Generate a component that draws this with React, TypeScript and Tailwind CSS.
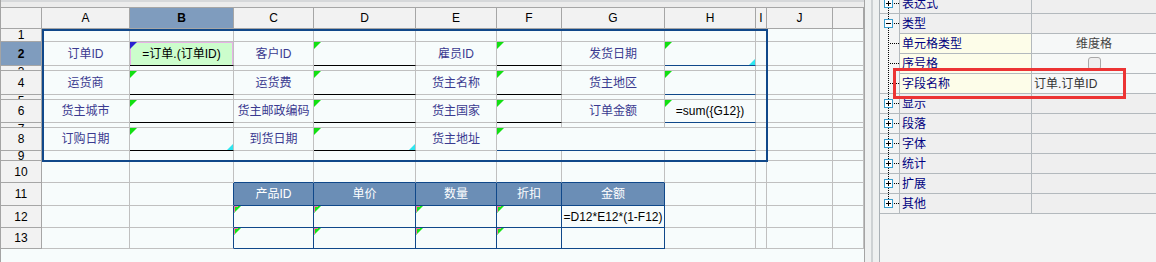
import React from "react";

type Cell = {
  t?: string;
  k?: "lbl" | "hd";
  bb?: "k" | "b";
  br?: "b";
  tri?: "g" | "v" | "gp";
  cy?: boolean;
  green?: boolean;
  span?: number;
};

const COLS = ["A", "B", "C", "D", "E", "F", "G", "H", "I", "J", ""];
const THIN = [3, 5, 7];

function blank(): Cell[] {
  return Array.from({ length: 11 }, () => ({}));
}

function buildRows(): Cell[][] {
  const rows: Cell[][] = [];
  for (let i = 0; i < 13; i++) rows.push(blank());

  rows[1] = [
    { t: "订单ID", k: "lbl" },
    { t: "=订单.(订单ID)", green: true, tri: "v", bb: "k" },
    { t: "客户ID", k: "lbl" },
    { tri: "g", bb: "k" },
    { t: "雇员ID", k: "lbl" },
    { tri: "g", bb: "k" },
    { t: "发货日期", k: "lbl" },
    { tri: "g", bb: "b", cy: true },
    {},
    {},
    {},
  ];
  rows[3] = [
    { t: "运货商", k: "lbl" },
    { tri: "g", bb: "k" },
    { t: "运货费", k: "lbl" },
    { tri: "g", bb: "k" },
    { t: "货主名称", k: "lbl" },
    { tri: "g", bb: "k" },
    { t: "货主地区", k: "lbl" },
    { tri: "g", bb: "b" },
    {},
    {},
    {},
  ];
  rows[5] = [
    { t: "货主城市", k: "lbl" },
    { tri: "g", bb: "k" },
    { t: "货主邮政编码", k: "lbl" },
    { tri: "g", bb: "k" },
    { t: "货主国家", k: "lbl" },
    { tri: "g", bb: "k" },
    { t: "订单金额", k: "lbl" },
    { t: "=sum({G12})", tri: "g", bb: "b" },
    {},
    {},
    {},
  ];
  rows[7] = [
    { t: "订购日期", k: "lbl" },
    { tri: "g", bb: "k", cy: true },
    { t: "到货日期", k: "lbl" },
    { tri: "g", bb: "k", cy: true },
    { t: "货主地址", k: "lbl" },
    { tri: "g", bb: "b", span: 3 },
    {},
    {},
    {},
  ];

  // order detail table
  for (let c = 2; c <= 6; c++) rows[9][c] = { bb: "b" };
  const heads = ["产品ID", "单价", "数量", "折扣", "金额"];
  for (let r = 10; r <= 12; r++) {
    rows[r][1] = { br: "b" };
    for (let c = 2; c <= 6; c++) {
      if (r === 10) rows[r][c] = { t: heads[c - 2], k: "hd", br: "b", bb: "b" };
      else rows[r][c] = { tri: c < 6 ? "gp" : undefined, br: "b", bb: "b" };
    }
  }
  rows[11][6].t = "=D12*E12*(1-F12)";
  return rows;
}

function Tri({ kind }: { kind: "g" | "v" | "gp" }) {
  if (kind === "gp") {
    return (
      <svg className="absolute left-0 top-0" width="7" height="7" viewBox="0 0 7 7">
        <polygon points="0,0 7,0 0,7" fill="#16e616" />
        <rect x="0" y="0" width="1" height="6" fill="#f47aa0" />
        <rect x="1" y="0" width="3" height="1" fill="#f47aa0" />
      </svg>
    );
  }
  return (
    <svg className="absolute left-0 top-0" width="7" height="7" viewBox="0 0 7 7">
      <polygon points="0,0 7,0 0,7" fill={kind === "v" ? "#2a20d2" : "#12e012"} />
    </svg>
  );
}

function Corner() {
  return (
    <svg className="absolute bottom-0 right-0" width="6" height="6" viewBox="0 0 6 6">
      <polygon points="6,0 6,6 0,6" fill="#2ee6f0" />
    </svg>
  );
}

function SheetCell({ c }: { c: Cell }) {
  const right = c.br === "b" ? "border-r-[#10488a]" : "border-r-[#c0c0c0]";
  const bottom =
    c.bb === "k"
      ? "border-b-black"
      : c.bb === "b"
      ? "border-b-[#10488a]"
      : "border-b-[#c0c0c0]";
  const tone =
    c.k === "hd"
      ? "bg-[#6b8eb6] text-white"
      : c.green
      ? "bg-[#ccfdcc] text-black"
      : c.k === "lbl"
      ? "text-[#3a3a90]"
      : "text-black";
  return (
    <div
      className={`relative flex items-center justify-center overflow-visible whitespace-nowrap border-r border-b text-[12px] ${right} ${bottom} ${tone} ${
        c.span === 3 ? "col-span-3" : ""
      }`}
    >
      {c.green && (
        <span className="pointer-events-none absolute inset-0 border border-b-0 border-[#e6b2e6]" />
      )}
      {c.tri && <Tri kind={c.tri} />}
      {c.cy && <Corner />}
      {c.t && <span className="relative">{c.t}</span>}
    </div>
  );
}

function Sheet() {
  const rows = buildRows();
  return (
    <div className="flex w-[865px] flex-col border-l border-r border-[#a4a4a4] bg-[#f7fcfc]">
      <div className="h-[7px] border-t-2 border-[#d6d8da] bg-[#ececec]" />
      <div className="relative grid grid-cols-[41px_88px_104px_80px_102px_81px_65px_103px_91px_11px_66px_31px] grid-rows-[22px_13px_24px_5px_24px_5px_23px_5px_23px_10px_22px_23px_22px_21px]">
        <div className="border-t border-r border-b border-[#a6a6a6] bg-[#f2f2f2]" />
        {COLS.map((h, i) => (
          <div
            key={i}
            className={`flex items-center justify-center border-t border-r border-b border-[#a6a6a6] text-[12px] text-black ${
              h === "B" ? "bg-[#7f9cbe] font-bold" : "bg-[#f2f2f2]"
            }`}
          >
            {h}
          </div>
        ))}
        {rows.map((row, r) => (
          <React.Fragment key={r}>
            <div
              className={`flex justify-center overflow-hidden border-r border-b border-[#a6a6a6] text-[12px] leading-[12px] text-black ${
                THIN.includes(r + 1) ? "items-start" : "items-center"
              } ${r === 1 ? "bg-[#7f9cbe] font-bold" : "bg-[#f2f2f2]"}`}
            >
              {r + 1}
            </div>
            {row.map((c, i) => (
              <SheetCell key={i} c={c} />
            ))}
          </React.Fragment>
        ))}
        <div className="pointer-events-none absolute left-[41px] top-[22px] h-[133px] w-[726px] border-2 border-[#10488a]" />
      </div>
      <div className="flex-1" />
    </div>
  );
}

type Prop = {
  t: string;
  sub?: boolean;
  open?: boolean;
  v?: string;
  left?: boolean;
  check?: boolean;
  line?: boolean;
  last?: boolean;
};

const PROPS: Prop[] = [
  { t: "表达式", line: false },
  { t: "类型", open: true },
  { t: "单元格类型", sub: true, v: "维度格" },
  { t: "序号格", sub: true, check: true },
  { t: "字段名称", sub: true, v: "订单.订单ID", left: true, line: true },
  { t: "显示", line: true },
  { t: "段落", line: true },
  { t: "字体", line: true },
  { t: "统计", line: true },
  { t: "扩展", line: true },
  { t: "其他", line: true, last: true },
];

function Gutter({ p }: { p: Prop }) {
  return (
    <svg className="absolute left-0 top-0" width="20" height="20" viewBox="0 0 20 20">
      <line
        x1="8.5"
        y1="0"
        x2="8.5"
        y2={p.last ? 10 : 20}
        stroke="#000"
        strokeDasharray="1 1"
      />
      {p.sub ? (
        <line x1="10" y1="9.5" x2="20" y2="9.5" stroke="#000" strokeDasharray="1 1" />
      ) : (
        <>
          <line x1="14" y1="9.5" x2="20" y2="9.5" stroke="#000" strokeDasharray="1 1" />
          <rect x="4.5" y="5.5" width="8" height="8" fill="#fff" stroke="#3a9ccc" />
          <rect x="6" y="9" width="5" height="1" fill="#000" />
          {!p.open && <rect x="8" y="7" width="1" height="5" fill="#000" />}
        </>
      )}
    </svg>
  );
}

function Panel() {
  return (
    <div className="relative flex-1 overflow-hidden border-l border-[#a9b0b5] bg-[#f3f4f4]">
      <div className="-mt-[6px] flex flex-col">
        {PROPS.map((p, i) => (
          <div key={i} className="grid h-[20px] grid-cols-[20px_132px_1fr]">
            <div
              className={`relative border-r border-[#b3b9bd] bg-[#f3f4f4] ${
                p.line || (!p.sub && i === 0) ? "border-b" : ""
              }`}
            >
              <Gutter p={p} />
            </div>
            <div
              className={`flex items-center border-r border-b border-[#b3b9bd] pl-[2px] text-[12px] text-[#000080] ${
                p.sub ? "bg-[#fdfde9]" : "bg-[#efefef]"
              }`}
            >
              {p.t}
            </div>
            <div
              className={`flex items-center border-b border-[#b3b9bd] text-[12px] ${
                p.sub ? "bg-[#f6f8f8]" : "bg-[#efefef]"
              } ${p.left ? "justify-start pl-[2px] text-[#333333]" : "justify-center text-[#444444]"}`}
            >
              {p.v}
              {p.check && (
                <span className="block h-[13px] w-[13px] rounded-[3px] border border-[#a8a8a8] bg-[#efefef]" />
              )}
            </div>
          </div>
        ))}
      </div>
      <div className="pointer-events-none absolute left-[13px] top-[68px] h-[31px] w-[233px] border-[3px] border-[#ec3434]" />
    </div>
  );
}

export default function App() {
  return (
    <div className="flex h-[262px] w-[1156px] overflow-hidden bg-[#eef0f0] font-['Liberation_Sans','Noto_Sans_CJK_SC',sans-serif]">
      <Sheet />
      <div className="flex w-[14px] justify-center bg-[#eef0f0]">
        <div className="w-[2px] bg-[#cdd1d3]" />
      </div>
      <Panel />
    </div>
  );
}
